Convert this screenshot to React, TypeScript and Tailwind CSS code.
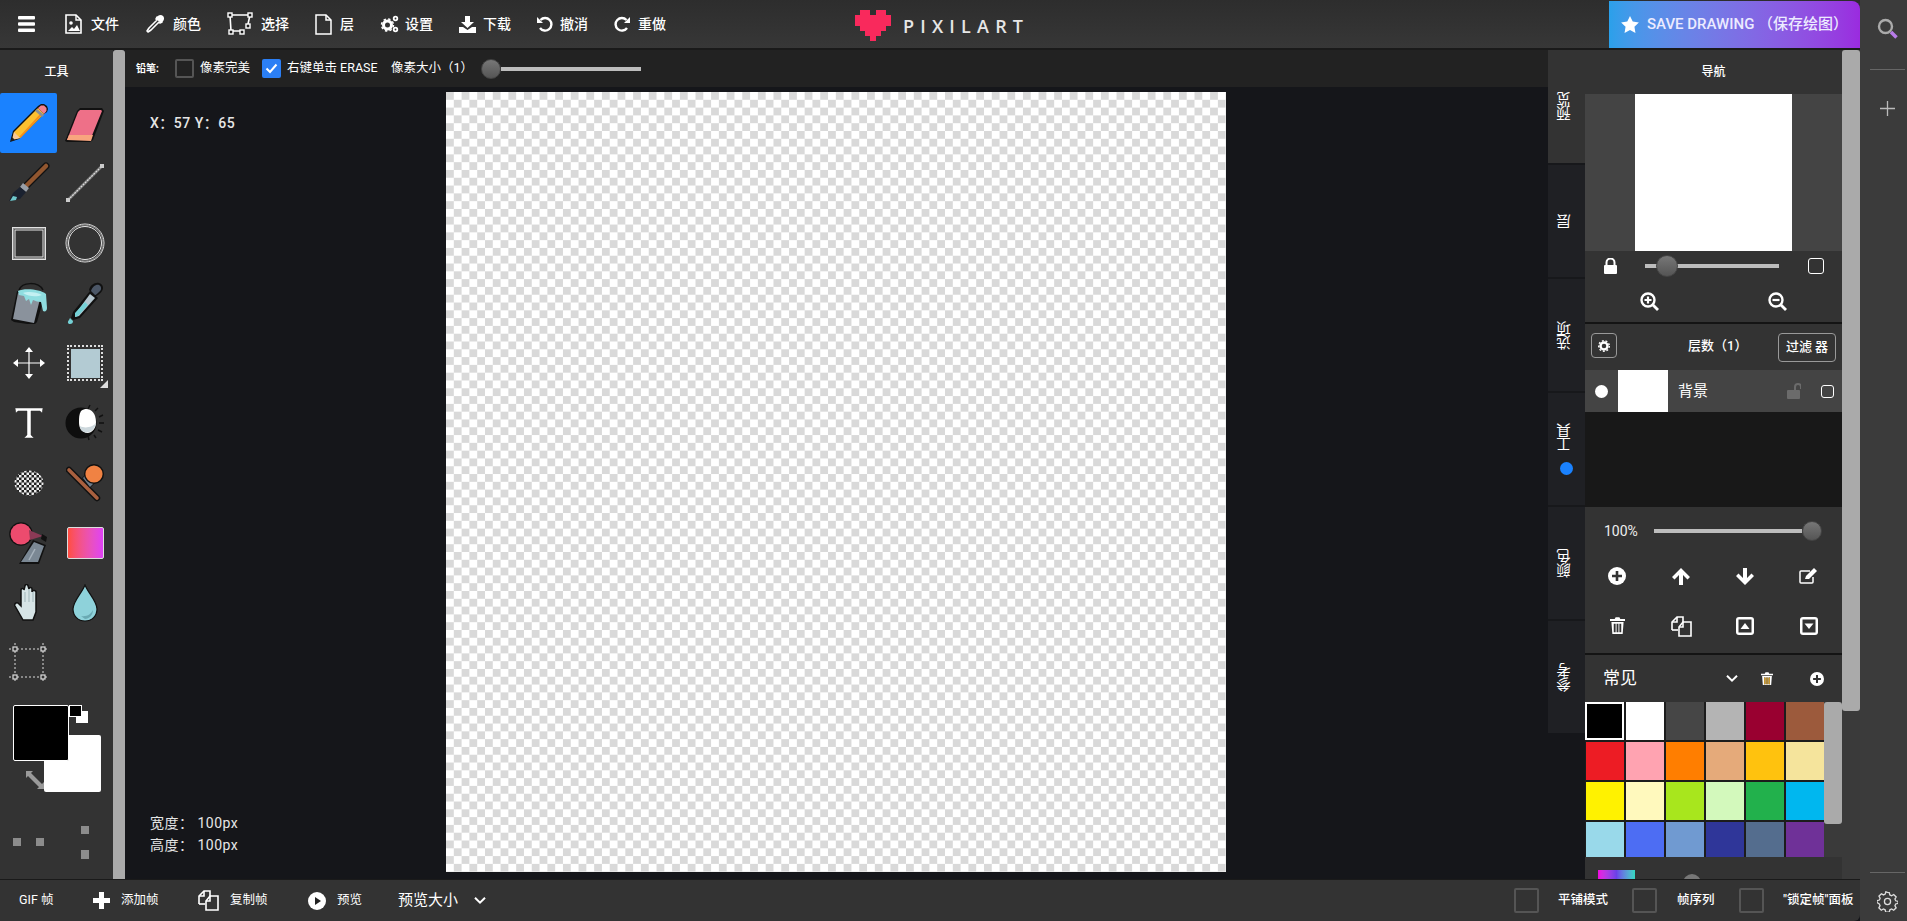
import React from "react";

const font = "font-['Roboto','Noto_Sans_CJK_SC',sans-serif]";

function MenuItem({ icon, label, w, gap }: { icon: React.ReactNode; label: string; w: string; gap: string }) {
  return (
    <div className={`flex items-center ${w} ${gap}`}>
      {icon}
      <span className="text-[14px] font-medium text-white leading-none whitespace-nowrap">{label}</span>
    </div>
  );
}

const Hamburger = () => (
  <svg width="17" height="16" viewBox="0 0 17 16" fill="#fff"><rect y="0" width="17" height="3.4" rx="1" /><rect y="6.3" width="17" height="3.4" rx="1" /><rect y="12.6" width="17" height="3.4" rx="1" /></svg>
);
const FileImg = () => (
  <svg width="17" height="20" viewBox="0 0 17 20" fill="none"><path d="M1 1h10l5 5v13H1z" stroke="#fff" strokeWidth="1.6" /><path d="M11 1v5h5" stroke="#fff" strokeWidth="1.4" /><circle cx="6" cy="9" r="1.8" fill="#fff" /><path d="M3 17l4-4 2 2 3-4 3 6z" fill="#fff" /></svg>
);
const Dropper = ({ s = 20 }: { s?: number }) => (
  <svg width={s} height={s} viewBox="0 0 20 20" fill="none"><path d="M12 3l5 5-2 1-1-1-8 8-3 2-1-1 2-3 8-8-1-1z" stroke="#fff" strokeWidth="1.6" strokeLinejoin="round" /><path d="M11 5c1-4 5-5 7-3s1 5-2 7z" fill="#fff" /></svg>
);
const SelectI = () => (
  <svg width="26" height="24" viewBox="0 0 26 24" fill="none"><path d="M3 3h20M3 3l1 16M23 3l-2 9M4 19h10" stroke="#fff" strokeWidth="1.6" /><g fill="#1f1f1f" stroke="#fff" strokeWidth="1.4"><rect x="1" y="1" width="4" height="4" /><rect x="21" y="1" width="4" height="4" /><rect x="2" y="18" width="4" height="4" /><rect x="13" y="18" width="4" height="4" /><rect x="19" y="12" width="4" height="4" /></g></svg>
);
const Doc = () => (
  <svg width="17" height="21" viewBox="0 0 17 21" fill="none" stroke="#fff" strokeWidth="1.5"><path d="M1 1h10l5 5v14H1z" /><path d="M11 1v5h5" /></svg>
);
const Gears = () => (
  <svg width="20" height="20" viewBox="0 0 20 20" fill="none"><circle cx="7.500" cy="11" r="4" stroke="#fff" strokeWidth="3" /><circle cx="7.500" cy="11" r="6" stroke="#fff" strokeWidth="1.500" strokeDasharray="2.400 2.300" /><circle cx="15.500" cy="4.500" r="1.800" stroke="#fff" strokeWidth="1.800" /><circle cx="15.500" cy="15.500" r="1.800" stroke="#fff" strokeWidth="1.800" /></svg>
);
const Download = () => (
  <svg width="17" height="17" viewBox="0 0 17 17" fill="#fff"><path d="M6 0h5v6h4l-6.500 6L2 6h4z" /><path d="M0 11h4l4.500 3 4.500-3h4v6H0z" /></svg>
);
const Undo = () => (
  <svg width="16" height="16" viewBox="0 0 16 16" fill="none"><path d="M3.500 4A6.300 6.300 0 1 1 3 12" stroke="#fff" strokeWidth="2.400" /><path d="M0 1v6h6z" fill="#fff" /></svg>
);
const Redo = () => (
  <svg width="16" height="16" viewBox="0 0 16 16" fill="none"><path d="M12.500 4A6.300 6.300 0 1 0 13 12" stroke="#fff" strokeWidth="2.400" /><path d="M16 1v6h-6z" fill="#fff" /></svg>
);

const Heart = () => (
  <svg width="36" height="31" viewBox="0 0 7 6" fill="#f9295c" shapeRendering="crispEdges"><path d="M1 0h2v1h1V0h2v1h1v2H6v1H5v1H4v1H3V5H2V4H1V3H0V1h1z" /></svg>
);

const Pencil = () => (
  <svg width="42" height="42" viewBox="0 0 42 42"><path d="M2 40l3-11L30 4l3-2h3l3 2 1 3-1 3-3 2L11 37z" fill="#111" /><path d="M4 38l2-8 24-24 6 6-24 24z" fill="#fdc02f" /><path d="M11 35L33 11l1.500 1.500-22 23.500z" fill="#f48f1c" /><path d="M30 6l3-2.500h3l2.500 2.500v3L36 12z" fill="#f2808f" /><path d="M29 7l7 6-2 2-7-6z" fill="#8a8f98" /><path d="M4 38l2-8 6 6z" fill="#f6c99a" /><path d="M3 39l1-4 3 3z" fill="#222" /></svg>
);
const Eraser = () => (
  <svg width="42" height="42" viewBox="0 0 42 42"><path d="M1 39l12-30 3-3h22l2 3-11 29-3 2H3z" fill="#111" /><path d="M3 38l11-28 2-2h21l1 1-11 27z" fill="#ee7088" /><path d="M3 38l2-5h24l-2 6z" fill="#f8a57e" /></svg>
);
const Brush = () => (
  <svg width="42" height="42" viewBox="0 0 42 42"><path d="M38 4L18 24" stroke="#111" strokeWidth="7" strokeLinecap="round" /><path d="M38 4L18 24" stroke="#91562f" strokeWidth="4.500" strokeLinecap="round" /><path d="M15 21l6 5-3 4-6-5z" fill="#9aa0a8" /><path d="M12 25l6 5-6 7-11 2 4-8z" fill="#1b2230" /><path d="M2 39l3-5 4 1-1 3z" fill="#6ec7cc" /></svg>
);
const LineTool = () => (
  <svg width="40" height="40" viewBox="0 0 40 40"><path d="M3 37L37 3" stroke="#777" strokeWidth="3" /><path d="M3 37L37 3" stroke="#ddd" strokeWidth="1.200" strokeDasharray="2 1" /><rect x="1" y="35" width="4" height="4" fill="#ccc" /><rect x="35" y="1" width="4" height="4" fill="#ccc" /></svg>
);
const RectTool = () => (
  <svg width="34" height="33" viewBox="0 0 34 33" fill="none"><rect x=".5" y=".5" width="33" height="32" stroke="#e2e2e2" strokeWidth="1" /><rect x="1.500" y="1.500" width="31" height="30" stroke="#8e8e8e" strokeWidth="1" /><rect x="3" y="3" width="28" height="27" stroke="#e6e6e6" strokeWidth="1" /></svg>
);
const CircleTool = () => (
  <svg width="40" height="40" viewBox="0 0 40 40" fill="none"><circle cx="20" cy="20" r="19" stroke="#e2e2e2" strokeWidth="1" /><circle cx="20" cy="20" r="18" stroke="#8e8e8e" strokeWidth="1" /><circle cx="20" cy="20" r="16.500" stroke="#e6e6e6" strokeWidth="1" /></svg>
);
const Bucket = () => (
  <svg width="38" height="42" viewBox="0 0 38 42"><path d="M9 8C12 0 28-1 33 8" fill="none" stroke="#111" strokeWidth="1.500" /><path d="M7 9l-6 29 3 2 20 3 3-3 8-28z" fill="#111" /><path d="M8 11L3 37l21 4 6-24z" fill="#8a929c" /><path d="M8 9c6-3 22-2 28 3l1 14c0 3-2 4-4 3l-2-9c-3 0-5-1-8-2l-2 5-2-6-3 2-2-5-5-1z" fill="#8fdde0" /><path d="M13 11c5-2 14-1 19 2-5 2-13 2-19-2z" fill="#c3f0f2" /></svg>
);
const Pipette = () => (
  <svg width="38" height="42" viewBox="0 0 38 42"><path d="M24 9l8 7-18 20-7 2-2-2 2-6z" fill="#111" /><path d="M24 12l5 4-16 18-4 1 1-4z" fill="#b5c6cf" /><path d="M9 31l10-11 3 3-10 11-3 1z" fill="#75d1d6" /><path d="M23 8c1-5 6-8 10-7 4 1 5 5 3 8s-6 6-8 5z" fill="#111" /><path d="M25 9c1-4 5-7 8-6 2 1 3 4 1 6s-4 4-5 4z" fill="#4b5666" /><path d="M4 36l3 3c0 2-1 3-3 3s-3-2-1-4z" fill="#75d1d6" /></svg>
);
const Move = () => (
  <svg width="32" height="32" viewBox="0 0 32 32" fill="none" stroke="#fff"><path d="M16 3v26M3 16h26" strokeWidth="1.200" /><path d="M16 0l4 5h-8zM16 32l4-5h-8zM0 16l5-4v8zM32 16l-5-4v8z" fill="#fff" stroke="none" /></svg>
);
const SelFill = () => (
  <div className="relative w-[36px] h-[36px] border-2 border-dotted border-[#ddd] flex items-center justify-center">
    <div className="w-[29px] h-[29px] bg-[#b3cbd3]" />
    <div className="absolute right-[-7px] bottom-[-9px] w-0 h-0 border-l-[8px] border-l-transparent border-b-[8px] border-b-[#ddd]" />
  </div>
);
const TextT = () => (
  <svg width="30" height="32" viewBox="0 0 30 32"><path d="M1 1h28l-1 5-2-2H17v24l3 3H10l3-3V4H4L2 6z" fill="#fff" stroke="#333" strokeWidth=".5" /></svg>
);
const Lighten = () => (
  <svg width="40" height="40" viewBox="0 0 40 40"><circle cx="16" cy="20" r="15.500" fill="#0e0e0e" /><path d="M16 8c7-5 15 0 15 11 0 9-7 13-12 10-4-2-5-6-5-10 0-4 0-8 2-11z" fill="#fff" /><path d="M15 23c5 3 13 1 16-3-1 7-7 11-12 9-3-1-4-3-4-6z" fill="#cdd8dd" /><g stroke="#111" strokeWidth="1.500"><path d="M25 2l-2 4M33 5l-3 3M38 12l-4 2M39 20h-5M37 29l-4-2M31 35l-2-3M24 37l-1-4" /></g></svg>
);
const CheckerBlob = () => (
  <svg width="30" height="26" viewBox="0 0 30 26"><defs><pattern id="cb" width="5" height="5" patternUnits="userSpaceOnUse"><rect width="5" height="5" fill="#222" /><rect width="2.500" height="2.500" fill="#eee" /><rect x="2.500" y="2.500" width="2.500" height="2.500" fill="#eee" /></pattern></defs><ellipse cx="15" cy="13" rx="14.500" ry="12.500" fill="url(#cb)" /></svg>
);
const Stamp = () => (
  <svg width="38" height="40" viewBox="0 0 38 40"><path d="M3 7L31 35" stroke="#111" strokeWidth="6.500" strokeLinecap="round" /><path d="M3 7L31 35" stroke="#a9603f" strokeWidth="3.600" strokeLinecap="round" /><path d="M16 15l6-6 9 9-7 7z" fill="#111" /><path d="M17 15l5-5 8 8-6 6z" fill="#6c7c8c" /><circle cx="28" cy="11" r="10" fill="#111" /><circle cx="28" cy="11" r="8.600" fill="#f08243" /></svg>
);
const Spray = () => (
  <svg width="40" height="42" viewBox="0 0 40 42"><circle cx="12" cy="12" r="11.800" fill="#111" /><circle cx="12" cy="12" r="10.500" fill="#ec4b6e" /><path d="M20 8l14 6-13 4z" fill="#8b3a56" /><path d="M33 12l5 3-1 5-5-3z" fill="#111" /><path d="M24 18l13 5-7 19H10z" fill="#111" /><path d="M25 20l10 4-6 16H12z" fill="#7b8894" /><path d="M26 27l-6 11" stroke="#a8b3bd" strokeWidth="1.500" /></svg>
);
const Gradient = () => (
  <div className="w-[37px] h-[32px] rounded-[2px] border border-[#ddd] bg-gradient-to-r from-[#ff4d3e] to-[#e040f5]" />
);
const Hand = () => (
  <svg width="30" height="38" viewBox="0 0 30 38"><path d="M9 36L1 22c-1-2 1-4 3-3l3 3V6c0-2 3-2 3 0l1-4c0-2 3-2 3 0l1 3c0-2 3-2 3 0v3c0-2 4-2 4 0v20l-3 8z" fill="#d6e4e6" stroke="#111" strokeWidth="1.500" /><path d="M11 8v10M15 5v13M19 8v10" stroke="#9fb5b9" strokeWidth="1" /></svg>
);
const Drop = () => (
  <svg width="26" height="38" viewBox="0 0 26 38"><path d="M13 1c3 8 12 16 12 24 0 7-5 12-12 12S1 32 1 25C1 17 10 9 13 1z" fill="#8ed2da" stroke="#111" strokeWidth="1.200" /><path d="M9 32c6 1 10-2 12-6 0 5-4 9-8 9z" fill="#6aaab3" /></svg>
);
const FreeSel = () => (
  <svg width="40" height="40" viewBox="0 0 40 40" fill="none" stroke="#ddd"><path d="M0 6h40M0 34h40M6 0v40M34 0v40" strokeWidth="1" strokeDasharray="2 2" /><g fill="#333" strokeWidth="1.200"><rect x="4" y="4" width="4" height="4" /><rect x="32" y="4" width="4" height="4" /><rect x="4" y="32" width="4" height="4" /><rect x="32" y="32" width="4" height="4" /></g></svg>
);

function Tool({ children, active }: { children?: React.ReactNode; active?: boolean }) {
  return <div className={`h-[60px] flex items-center justify-center rounded-[2px] ${active ? "bg-[#1a82ff]" : ""}`}>{children}</div>;
}

function LeftPanel() {
  return (
    <div className="w-[113px] bg-[#333333] flex flex-col shrink-0 overflow-hidden">
      <div className="h-[43px] flex items-center justify-center text-[12px] font-medium text-white">工具</div>
      <div className="grid grid-cols-[57px_56px]">
        <Tool active><Pencil /></Tool><Tool><Eraser /></Tool>
        <Tool><Brush /></Tool><Tool><LineTool /></Tool>
        <Tool><RectTool /></Tool><Tool><CircleTool /></Tool>
        <Tool><Bucket /></Tool><Tool><Pipette /></Tool>
        <Tool><Move /></Tool><Tool><SelFill /></Tool>
        <Tool><TextT /></Tool><Tool><Lighten /></Tool>
        <Tool><CheckerBlob /></Tool><Tool><Stamp /></Tool>
        <Tool><Spray /></Tool><Tool><Gradient /></Tool>
        <Tool><Hand /></Tool><Tool><Drop /></Tool>
        <Tool><FreeSel /></Tool><Tool />
      </div>
      <div className="relative mt-[12px] ml-[13px] w-[90px] h-[90px]">
        <div className="absolute left-[31px] top-[30px] w-[57px] h-[57px] bg-white rounded-[2px]" />
        <div className="absolute left-0 top-0 w-[56px] h-[56px] bg-black border border-white rounded-[2px]" />
        <div className="absolute left-[63px] top-[6px] w-[12px] h-[12px] bg-white" />
        <div className="absolute left-[56px] top-0 w-[13px] h-[12px] bg-black border border-white" />
        <svg className="absolute left-[13px] top-[66px]" width="18" height="18" viewBox="0 0 18 18" fill="#9a9a9a"><path d="M0 0h7L5 2l11 11 2-2v7h-7l2-2L2 5 0 7z" /></svg>
      </div>
      <div className="relative mt-[31px] h-[34px]">
        <div className="absolute left-[13px] top-[12px] w-[8px] h-[8px] bg-[#8c8c8c]" />
        <div className="absolute left-[36px] top-[12px] w-[8px] h-[8px] bg-[#8c8c8c]" />
        <div className="absolute left-[81px] top-0 w-[8px] h-[8px] bg-[#8c8c8c]" />
        <div className="absolute left-[81px] top-[24px] w-[8px] h-[9px] bg-[#8c8c8c]" />
      </div>
    </div>
  );
}

const Check = () => (
  <span className="w-[19px] h-[19px] bg-[#2b7ff5] rounded-[2px] flex items-center justify-center">
    <svg width="13" height="11" viewBox="0 0 13 11" fill="none" stroke="#fff" strokeWidth="2"><path d="M1.500 5.500l3.500 3.500 6.500-7.500" /></svg>
  </span>
);

function OptionsBar() {
  return (
    <div className="h-[37px] bg-[#222222] flex items-center text-white shrink-0 text-[12.500px]">
      <span className="ml-[11px] text-[10px] font-bold w-[39px]">铅笔:</span>
      <span className="w-[19px] h-[19px] border-2 border-[#555] rounded-[2px]" />
      <span className="ml-[6px] w-[62px] whitespace-nowrap">像素完美</span>
      <Check />
      <span className="ml-[6px] w-[104px] whitespace-nowrap">右键单击 ERASE</span>
      <span className="w-[90px] whitespace-nowrap">像素大小（1）</span>
      <div className="relative w-[160px] h-[20px] flex items-center">
        <div className="ml-[20px] w-[140px] h-[4px] bg-[#bdbdbd]" />
        <div className="absolute left-0 top-0 w-[20px] h-[20px] rounded-full bg-gradient-to-b from-[#777] to-[#555] border border-[#444]" />
      </div>
    </div>
  );
}

function Canvas() {
  return (
    <div className="relative flex-1 bg-[#15161a] pt-[5px] pl-[321px] overflow-hidden">
      <div className="w-[780px] h-[780px] bg-[repeating-conic-gradient(#ffffff_0_25%,#d9d9d9_0_50%)] bg-[length:15.600px_15.600px]" />
      <div className="absolute left-[25px] top-[29px] text-[14px] font-medium text-[#e6e6e6] tracking-[0.5px] leading-none whitespace-nowrap">X：57 Y：65</div>
      <div className="absolute left-[25px] top-[725px] text-[14px] text-[#e6e6e6] tracking-[0.500px] leading-[22px] whitespace-nowrap">
        <div>宽度： 100px</div>
        <div>高度： 100px</div>
      </div>
    </div>
  );
}

function TabLabel({ t, active, dot }: { t: string; active?: boolean; dot?: boolean }) {
  return (
    <div className={`flex flex-col items-center justify-center ${active ? "h-[113px] bg-[#333333]" : "h-[114px] bg-[#1f2024] border-t-2 border-[#17181b]"}`}>
      <div className="text-[14.500px] text-white leading-none [writing-mode:vertical-rl] rotate-180">{t}</div>
      {dot && <div className="mt-[10px] w-[13px] h-[13px] rounded-full bg-[#1a82ff]" />}
    </div>
  );
}

function Tabs() {
  return (
    <div className="w-[37px] shrink-0 flex flex-col self-start">
      <TabLabel t="预览" active />
      <TabLabel t="层" />
      <TabLabel t="选项" />
      <TabLabel t="工具" dot />
      <TabLabel t="颜色" />
      <TabLabel t="参考" />
    </div>
  );
}

const Lock = ({ c = "#fff", open }: { c?: string; open?: boolean }) => (
  <svg width="15" height="16" viewBox="0 0 15 16" fill={c}><rect x="1" y="7" width="13" height="9" rx="1" /><path d={open ? "M9 7V4a3 3 0 0 1 6 0v2" : "M3.500 7V4.500a4 4 0 0 1 8 0V7"} fill="none" stroke={c} strokeWidth="2" /></svg>
);
const SqOutline = ({ s = 14 }: { s?: number }) => <span className="border-[1.500px] border-white rounded-[3px] block" style={{ width: s, height: s }} />;
const ZoomI = ({ minus }: { minus?: boolean }) => (
  <svg width="19" height="19" viewBox="0 0 19 19" fill="none" stroke="#fff"><circle cx="8" cy="8" r="6.500" strokeWidth="2.400" /><path d="M13 13l5 5" strokeWidth="2.800" /><path d={minus ? "M4.500 8h7" : "M4.500 8h7M8 4.500v7"} strokeWidth="2.200" /></svg>
);
const PlusCircle = ({ s = 18 }: { s?: number }) => (
  <svg width={s} height={s} viewBox="0 0 18 18"><circle cx="9" cy="9" r="9" fill="#fff" /><path d="M4 9h10M9 4v10" stroke="#333" strokeWidth="2.600" /></svg>
);
const ArrowUp = () => <svg width="18" height="17" viewBox="0 0 18 17" fill="#fff"><path d="M9 0l9 9-2.500 2.500L11 7v10H7V7l-4.500 4.500L0 9z" /></svg>;
const ArrowDown = () => <svg width="18" height="17" viewBox="0 0 18 17" fill="#fff"><path d="M9 17l9-9-2.500-2.500L11 10V0H7v10L2.500 5.500 0 8z" /></svg>;
const EditI = () => (
  <svg width="20" height="16" viewBox="0 0 20 16" fill="none"><path d="M14 9v5a1 1 0 0 1-1 1H2a1 1 0 0 1-1-1V4a1 1 0 0 1 1-1h9" stroke="#fff" strokeWidth="1.500" /><path d="M6 11l1-3 8-8 3 3-8 8z" fill="#fff" /></svg>
);
const Trash = ({ s = 15, stripes }: { s?: number; stripes?: string }) => (
  <svg width={s} height={s * 1.15} viewBox="0 0 16 18" fill="#fff"><path d="M0 2h5l1-2h4l1 2h5v2H0z" /><path d="M1.500 5h13l-1 13h-11zM4 7v9h2V7zM7 7v9h2V7zM10 7v9h2V7z" fillRule="evenodd" />{stripes && <path d="M4 7h2v9H4zM7 7h2v9H7zM10 7h2v9h-2z" fill={stripes} />}</svg>
);
const CopyI = ({ s = 21 }: { s?: number }) => (
  <svg width={s} height={s} viewBox="0 0 21 21" fill="none" stroke="#fff" strokeWidth="1.600"><path d="M1 14V6l5-5h6v5" /><path d="M6 1v5H1" /><path d="M1 14h6" /><path d="M8 20V11l4-5h8v14z" /><path d="M12 6v5H8" /></svg>
);
const BoxUp = ({ down }: { down?: boolean }) => (
  <svg width="18" height="18" viewBox="0 0 18 18"><rect width="18" height="18" rx="3" fill="#fff" /><rect x="2.500" y="2.500" width="13" height="13" fill="#333" /><path d={down ? "M4.500 6.500h9L9 12z" : "M4.500 12h9L9 6z"} fill="#fff" /></svg>
);
const Chevron = ({ w = 12 }: { w?: number }) => (
  <svg width={w} height={w * 0.7} viewBox="0 0 12 8" fill="none" stroke="#fff" strokeWidth="2"><path d="M1 1.500l5 5 5-5" /></svg>
);

const palette = [
  "#000000", "#ffffff", "#464646", "#b4b4b4", "#990030", "#9c5a3c",
  "#ed1c24", "#ffa3b1", "#ff7e00", "#e5aa7a", "#ffc20e", "#f5e49c",
  "#fff200", "#fff9bd", "#a8e61d", "#d3f9bc", "#22b14c", "#00b7ef",
  "#99d9ea", "#4d6df3", "#709ad1", "#2f3699", "#546d8e", "#6f3198",
];

function RightPanel() {
  return (
    <div className="w-[257px] shrink-0 bg-[#333333] flex flex-col overflow-hidden text-white">
      <div className="h-[44px] flex items-center justify-center text-[12px] font-medium shrink-0">导航</div>
      <div className="h-[157px] bg-[#444444] flex justify-center shrink-0"><div className="w-[157px] h-full bg-white" /></div>
      <div className="h-[30px] flex items-center relative shrink-0">
        <span className="ml-[18px]"><Lock /></span>
        <div className="ml-[27px] relative w-[134px] h-[4px] bg-[#bdbdbd]">
          <div className="absolute left-[11px] top-[-9px] w-[22px] h-[22px] rounded-full bg-gradient-to-b from-[#777] to-[#555] border border-[#444]" />
        </div>
        <span className="ml-[29px]"><SqOutline s={16} /></span>
      </div>
      <div className="h-[41px] flex items-center shrink-0">
        <span className="ml-[55px]"><ZoomI /></span>
        <span className="ml-[109px]"><ZoomI minus /></span>
      </div>
      <div className="h-[2px] bg-[#141414] shrink-0" />
      <div className="h-[46px] flex items-center shrink-0 pl-[6px] pr-[6px]">
        <span className="w-[26px] h-[25px] border border-[#999] rounded-[4px] flex items-center justify-center mt-[-3px]">
          <svg width="12" height="12" viewBox="0 0 12 12"><circle cx="6" cy="6" r="3.500" fill="none" stroke="#fff" strokeWidth="2.400" /><circle cx="6" cy="6" r="5.300" fill="none" stroke="#fff" strokeWidth="1.400" strokeDasharray="1.900 1.800" /></svg>
        </span>
        <span className="ml-[71px] text-[13px] font-medium mt-[-3px] whitespace-nowrap">层数（1）</span>
        <span className="ml-auto w-[58px] h-[29px] border border-[#999] rounded-[4px] flex items-center justify-center text-[13px] font-medium whitespace-nowrap">过滤 器</span>
      </div>
      <div className="h-[42px] bg-[#444444] flex items-center shrink-0">
        <span className="ml-[10px] w-[13px] h-[13px] rounded-full bg-white" />
        <span className="ml-[10px] w-[50px] h-[42px] bg-white" />
        <span className="ml-[10px] text-[15px] w-[108px]">背景</span>
        <Lock c="#6b6b6b" open />
        <span className="ml-[20px]"><SqOutline s={13} /></span>
      </div>
      <div className="h-[95px] bg-[#181818] shrink-0" />
      <div className="h-[44px] pt-[4px] flex items-center shrink-0">
        <span className="ml-[19px] w-[50px] text-[14px] text-[#eee]">100%</span>
        <div className="relative w-[148px] h-[4px] bg-[#bdbdbd]">
          <div className="absolute left-[148px] top-[-8px] w-[20px] h-[20px] rounded-full bg-gradient-to-b from-[#777] to-[#555] border border-[#444]" />
        </div>
      </div>
      <div className="grid grid-cols-[64px_64px_64px_64px] shrink-0">
        {[<PlusCircle key="a" />, <ArrowUp key="b" />, <ArrowDown key="c" />, <EditI key="d" />, <Trash key="e" />, <CopyI key="f" />, <BoxUp key="g" />, <BoxUp key="h" down />].map((ic, i) => (
          <div key={i} className="h-[50px] flex items-center justify-center">{ic}</div>
        ))}
      </div>
      <div className="h-[2px] bg-[#141414] mt-[2px] shrink-0" />
      <div className="h-[47px] flex items-center shrink-0">
        <span className="ml-[18px] text-[17px] w-[123px]">常见</span>
        <Chevron />
        <span className="ml-[23px]"><Trash s={12} stripes="#c9962a" /></span>
        <span className="ml-[37px]"><PlusCircle s={14} /></span>
      </div>
      <div className="flex h-[155px] shrink-0 bg-[#1c1c1c] overflow-hidden">
        <div className="w-[239px] pl-[1px] grid grid-cols-6 gap-[2px] content-start">
          {palette.map((c, i) => (
            <div key={c} className={`h-[38px] ${i === 0 ? "border-2 border-white -ml-[1px]" : ""}`} style={{ backgroundColor: c }} />
          ))}
        </div>
        <div className="w-[18px] bg-[#3a3a3a]"><div className="h-[122px] bg-[#aaaaaa] rounded-[3px]" /></div>
      </div>
      <div className="h-[40px] flex items-start shrink-0 relative">
        <div className="ml-[13px] mt-[13px] w-[37px] h-[20px] bg-gradient-to-r from-[#f000e0] via-[#6a40e8] to-[#30d8c0]" />
        <div className="ml-[48px] mt-[17px] w-[18px] h-[18px] rounded-full bg-[#777]" />
      </div>
    </div>
  );
}

function BottomBar() {
  return (
    <div className="h-[42px] bg-[#333333] border-t border-[#1a1a1a] flex items-center text-white text-[12.500px] shrink-0 rounded-br-[6px]">
      <span className="ml-[19px] w-[74px]">GIF 帧</span>
      <svg width="17" height="17" viewBox="0 0 17 17" fill="#fff"><path d="M6 0h5v6h6v5h-6v6H6v-6H0V6h6z" /></svg>
      <span className="ml-[11px] w-[77px]">添加帧</span>
      <CopyI />
      <span className="ml-[11px] w-[78px]">复制帧</span>
      <svg width="18" height="18" viewBox="0 0 18 18"><circle cx="9" cy="9" r="9" fill="#fff" /><path d="M7 5l6 4-6 4z" fill="#222" /></svg>
      <span className="ml-[11px] w-[61px]">预览</span>
      <span className="text-[15px] w-[76px] whitespace-nowrap">预览大小</span>
      <Chevron />
      <div className="flex-1" />
      <span className="w-[25px] h-[25px] border-2 border-[#555] rounded-[2px]" />
      <span className="ml-[19px] w-[50px] font-medium whitespace-nowrap">平铺模式</span>
      <span className="ml-[24px] w-[25px] h-[25px] border-2 border-[#555] rounded-[2px]" />
      <span className="ml-[20px] w-[37px] font-medium whitespace-nowrap">帧序列</span>
      <span className="ml-[25px] w-[25px] h-[25px] border-2 border-[#555] rounded-[2px]" />
      <span className="ml-[19px] w-[71px] mr-[6px] font-medium whitespace-nowrap">"锁定帧"面板</span>
    </div>
  );
}

function TopBar() {
  return (
    <div className="h-[48px] bg-gradient-to-b from-[#2d2d2d] to-[#373737] flex items-center shrink-0 relative">
      <span className="ml-[18px]"><Hamburger /></span>
      <span className="ml-[30px]" />
      <MenuItem icon={<FileImg />} label="文件" w="w-[80px]" gap="gap-[9px]" />
      <MenuItem icon={<Dropper />} label="颜色" w="w-[82px]" gap="gap-[8px]" />
      <MenuItem icon={<SelectI />} label="选择" w="w-[88px]" gap="gap-[8px]" />
      <MenuItem icon={<Doc />} label="层" w="w-[65px]" gap="gap-[8px]" />
      <MenuItem icon={<Gears />} label="设置" w="w-[79px]" gap="gap-[5px]" />
      <MenuItem icon={<Download />} label="下载" w="w-[78px]" gap="gap-[7px]" />
      <MenuItem icon={<Undo />} label="撤消" w="w-[77px]" gap="gap-[7px]" />
      <MenuItem icon={<Redo />} label="重做" w="w-[70px]" gap="gap-[8px]" />
      <div className="absolute left-[855px] top-[10px] flex items-center">
        <Heart />
        <span className="ml-[12px] text-[18px] font-semibold tracking-[6.200px] text-[#e6e6e6] font-['Open_Sans',sans-serif] leading-none">PIXILART</span>
      </div>
      <div className="flex-1" />
      <div className="w-[251px] h-[47px] mt-[1px] rounded-tr-[8px] bg-gradient-to-r from-[#2aa0ea] to-[#9a2bdf] flex items-center text-[15px] font-medium text-[#ecebff]">
        <svg className="ml-[12px]" width="18" height="17" viewBox="0 0 24 23" fill="#fff"><path d="M12 0l3.700 7.600 8.300 1.200-6 5.900 1.400 8.300L12 19l-7.400 4L6 14.700 0 8.800l8.300-1.200z" /></svg>
        <span className="ml-[8px] whitespace-nowrap">SAVE DRAWING （保存绘图）</span>
      </div>
    </div>
  );
}

function SideBar() {
  return (
    <div className="w-[47px] shrink-0 bg-[#3b3b3b] pl-[7px] flex flex-col items-center relative">
      <svg className="mt-[18px]" width="21" height="21" viewBox="0 0 21 21" fill="none"><circle cx="8.500" cy="8.500" r="6.500" stroke="#aaa" strokeWidth="2.400" /><path d="M14 14l5.500 5.500" stroke="#b77be8" strokeWidth="3.500" /></svg>
      <div className="mt-[30px] w-[35px] h-px bg-[#666]" />
      <svg className="mt-[31px]" width="15" height="15" viewBox="0 0 15 15" stroke="#bbb" strokeWidth="1.300"><path d="M0 7.500h15M7.500 0v15" /></svg>
      <div className="flex-1" />
      <div className="w-[35px] h-px bg-[#666]" />
      <svg className="mt-[18px] mb-[9px]" width="21" height="21" viewBox="0 0 24 24" fill="none" stroke="#ddd" strokeWidth="1.500"><path d="M12 1.500l2 .3.700 2.700 2 .9 2.400-1.400 2.800 2.800-1.400 2.400.9 2 2.700.7v2.200l-2.700.7-.9 2 1.400 2.400-2.800 2.800-2.400-1.400-2 .9-.7 2.700H10l-.7-2.700-2-.9-2.400 1.400-2.800-2.800 1.400-2.400-.9-2L0 13.200V11l2.700-.7.9-2L2.200 5.900 5 3.100l2.400 1.400 2-.9.700-2.700z" /><circle cx="12" cy="12" r="3.500" /></svg>
    </div>
  );
}

export default function App() {
  return (
    <div className={`${font} w-full h-screen flex overflow-hidden bg-[#15161a]`}>
      <div className="flex-1 min-w-0 flex flex-col">
        <TopBar />
        <div className="h-[2px] bg-[#1a1a1a] shrink-0" />
        <div className="flex-1 min-h-0 flex overflow-hidden">
          <LeftPanel />
          <div className="w-[12px] shrink-0 bg-[#aaaaaa] rounded-t-[3px]" />
          <div className="flex-1 min-w-0 flex flex-col">
            <OptionsBar />
            <Canvas />
          </div>
          <div className="flex bg-[#15161a] shrink-0">
            <Tabs />
            <RightPanel />
            <div className="w-[18px] shrink-0 bg-[#3a3a3a]"><div className="h-[661px] bg-[#aaaaaa] rounded-[3px]" /></div>
          </div>
        </div>
        <BottomBar />
      </div>
      <SideBar />
    </div>
  );
}
